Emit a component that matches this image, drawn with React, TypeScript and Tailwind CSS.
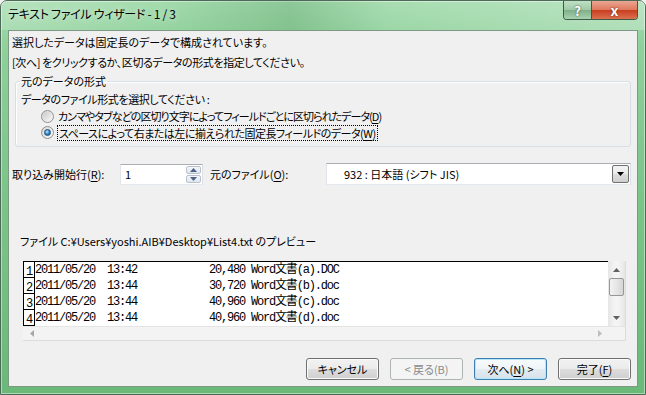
import React from 'react'

const jp = "font-['Noto_Sans_CJK_JP','Noto_Sans',sans-serif] [font-feature-settings:'palt']"
const mono = "font-['Liberation_Mono','Noto_Sans_CJK_JP',monospace] text-[12px] tracking-[-1.2px]"

const rows = [
  '2011/05/20  13:42            20,480 Word文書(a).DOC',
  '2011/05/20  13:44            30,720 Word文書(b).doc',
  '2011/05/20  13:44            40,960 Word文書(c).doc',
  '2011/05/20  13:44            40,960 Word文書(d).doc',
]

function U({ children }: { children: React.ReactNode }) {
  return <span className="underline decoration-1 underline-offset-[2px]">{children}</span>
}

function Radio({ checked = false }: { checked?: boolean }) {
  return (
    <span className="flex h-[13px] w-[13px] shrink-0 items-center justify-center rounded-full border border-[#8e8f8f] bg-[linear-gradient(135deg,#d6d6d6,#fafafa)]">
      {checked ? (
        <span className="h-[7px] w-[7px] rounded-full border border-[#1b4f7e] bg-[radial-gradient(circle_at_40%_35%,#c6ecff_0%,#3d92d4_45%,#0f3f6c_100%)]" />
      ) : (
        <span className="h-[9px] w-[9px] rounded-full bg-[linear-gradient(135deg,#cbcbcb,#f6f6f6)]" />
      )}
    </span>
  )
}

function Btn({ kind = 'normal', children }: { kind?: 'normal' | 'default' | 'disabled'; children: React.ReactNode }) {
  const look =
    kind === 'disabled'
      ? 'border-[#adb2b5] bg-[#f4f4f4] text-[#8a8a8a]'
      : kind === 'default'
        ? 'border-[#3c7fb1] text-black bg-[linear-gradient(#f7fbfd_0%,#eef4f8_49%,#e2ebf1_51%,#d6e2ea_100%)] shadow-[inset_0_0_0_1px_#b5e5f8]'
        : 'border-[#707070] text-black bg-[linear-gradient(#f2f2f2_0%,#ebebeb_49%,#dddddd_51%,#cfcfcf_100%)] shadow-[inset_0_0_0_1px_#fbfbfb]'
  return (
    <div className={`flex h-[22px] w-[73px] items-center justify-center rounded-[3px] border text-[11px] leading-none ${look}`}>
      {children}
    </div>
  )
}

function Tri({ dir, color }: { dir: 'up' | 'down' | 'left' | 'right'; color: string }) {
  const pts = {
    up: '0,4 3.5,0 7,4',
    down: '0,0 7,0 3.5,4',
    left: '4,0 4,7 0,3.5',
    right: '0,0 0,7 4,3.5',
  }[dir]
  const w = dir === 'up' || dir === 'down' ? 7 : 4
  const h = dir === 'up' || dir === 'down' ? 4 : 7
  return (
    <svg width={w} height={h} viewBox={`0 0 ${w} ${h}`}>
      <polygon points={pts} fill={color} />
    </svg>
  )
}

export default function App() {
  return (
    <div className={`h-[395px] w-[646px] overflow-hidden bg-[#f0f0f0] ${jp}`}>
      <div className="flex h-[395px] w-[646px] flex-col rounded-t-[7px] border border-[#4d6957] bg-[linear-gradient(180deg,#a4dcae_0%,#8fd09b_12%,#7fc78c_40%,#6ab978_100%)] shadow-[inset_0_0_0_1px_rgba(255,255,255,0.45)]">
        {/* title bar */}
        <div className="flex h-[29px] shrink-0 items-start bg-[linear-gradient(90deg,rgba(255,255,255,0.2)_0%,rgba(255,255,255,0)_25%,rgba(50,120,65,0.2)_45%,rgba(255,255,255,0.05)_60%,rgba(255,255,255,0.25)_100%)]">
          <div className="pl-[7px] pt-[5px] text-[12px] leading-[16px] tracking-[-0.3px] text-black [text-shadow:0_0_6px_rgba(255,255,255,0.8)]">
            テキスト ファイル ウィザード - 1 / 3
          </div>
          <div className="ml-auto mr-[7px] flex h-[19px] overflow-hidden rounded-b-[4px] border border-t-0 border-[#3e5a47]">
            <div className="flex w-[28px] items-center justify-center border-r border-[#3e5a47] bg-[linear-gradient(#bfe0c4_0%,#a0caa8_48%,#80b08a_52%,#a8d2b0_100%)] text-[13px] font-bold leading-none text-white [text-shadow:0_0_2px_#33443a]">
              ?
            </div>
            <div className="flex w-[45px] items-center justify-center bg-[linear-gradient(#eca693_0%,#df7a5e_48%,#c93f22_52%,#dc7150_100%)] text-[14px] font-bold leading-none text-white [text-shadow:0_0_2px_#5a1b10]">
              x
            </div>
          </div>
        </div>

        {/* client area */}
        <div className="mx-[7px] mb-[7px] flex flex-1 flex-col border border-[#7e9886] bg-[#f0f0f0] text-[11px] leading-[16px] text-black">
          <div className="ml-[3px] mt-[3px] h-[16px]">選択したデータは固定長のデータで構成されています。</div>
          <div className="ml-[3px] mt-[4px] h-[16px] tracking-[-0.4px]">[次へ] をクリックするか、区切るデータの形式を指定してください。</div>

          <fieldset className="ml-[6px] mt-[3px] h-[74px] w-[616px] rounded-[3px] border border-[#d5dfe5] px-[5px] shadow-[inset_1px_1px_0_#ffffff]">
            <legend className="ml-[-1px] px-[1px] leading-[16px]">元のデータの形式</legend>
            <div className="mt-[2px] h-[16px] tracking-[-0.4px]">データのファイル形式を選択してください :</div>
            <div className="ml-[20px] mt-[1px] flex h-[16px] items-center gap-[4px]">
              <Radio />
              <span className="tracking-[-0.95px]">
                カンマやタブなどの区切り文字によってフィールドごとに区切られたデータ(<U>D</U>)
              </span>
            </div>
            <div className="ml-[20px] flex h-[17px] items-center gap-[3px]">
              <Radio checked />
              <span className="border border-dotted border-black px-[1px] leading-[14px] tracking-[-0.5px]">
                スペースによって右または左に揃えられた固定長フィールドのデータ(<U>W</U>)
              </span>
            </div>
          </fieldset>

          <div className="mt-[16px] flex h-[22px] items-center">
            <div className="w-[111px] pl-[3px]">
              取り込み開始行(<U>R</U>):
            </div>
            <div className="flex h-[21px] w-[83px] items-center border border-[#abadb3] border-b-[#e3e9ef] border-l-[#e2e3ea] border-r-[#dbdfe6] bg-white">
              <span className="flex-1 pl-[4px]">1</span>
              <div className="mr-[1px] flex h-[17px] w-[15px] flex-col gap-[1px]">
                <div className="flex flex-1 items-center justify-center rounded-[2px] border border-[#b9c2cc] bg-[linear-gradient(#f4f7fa,#dfe6ee)]">
                  <Tri dir="up" color="#4d6185" />
                </div>
                <div className="flex flex-1 items-center justify-center rounded-[2px] border border-[#b9c2cc] bg-[linear-gradient(#f4f7fa,#dfe6ee)]">
                  <Tri dir="down" color="#4d6185" />
                </div>
              </div>
            </div>
            <div className="ml-[7px] w-[116px]">
              元のファイル(<U>O</U>):
            </div>
            <div className="flex h-[22px] w-[305px] items-center border border-[#abadb3] border-b-[#e3e9ef] border-l-[#e2e3ea] border-r-[#dbdfe6] bg-white">
              <span className="flex-1 pl-[17px]">932 : 日本語 (シフト JIS)</span>
              <div className="mr-[1px] flex h-[18px] w-[17px] items-center justify-center rounded-[2px] border border-[#707070] bg-[linear-gradient(#f2f2f2_0%,#ebebeb_49%,#dddddd_51%,#cfcfcf_100%)]">
                <Tri dir="down" color="#000000" />
              </div>
            </div>
          </div>

          <div className="ml-[11px] mt-[48px] h-[16px]">ファイル C:¥Users¥yoshi.AIB¥Desktop¥List4.txt のプレビュー</div>

          <div className="ml-[14px] mt-[12px] flex h-[80px] w-[603px] flex-col border-b border-r border-[#dcdcdc] bg-[#f0f0f0]">
            <div className="flex h-[65px]">
              <div className="flex-1 overflow-hidden border-l border-t border-black bg-white">
                {rows.map((r, i) => (
                  <div key={i} className="flex h-[16px]">
                    <div className="relative h-[16px] w-[11px] shrink-0 border-b border-r border-black">
                      <span className={`absolute bottom-[-3px] left-[2px] ${mono}`}>{i + 1}</span>
                    </div>
                    <div className={`whitespace-pre leading-[16px] ${mono}`}>{r}</div>
                  </div>
                ))}
              </div>
              <div className="flex w-[17px] flex-col bg-[linear-gradient(90deg,#e6e6e6,#f4f4f4_40%,#f4f4f4_60%,#e6e6e6)]">
                <div className="flex h-[17px] items-center justify-center">
                  <Tri dir="up" color="#606060" />
                </div>
                <div className="mx-[1px] h-[18px] rounded-[2px] border border-[#979797] bg-[linear-gradient(90deg,#f2f2f2,#e6e6e6_50%,#d6d6d6)]" />
                <div className="flex-1" />
                <div className="flex h-[17px] items-center justify-center">
                  <Tri dir="down" color="#606060" />
                </div>
              </div>
            </div>
            <div className="flex h-[15px] items-center border-t border-[#e4e4e4] bg-[#f3f3f3]">
              <div className="flex w-[17px] justify-center">
                <Tri dir="left" color="#a7a7a7" />
              </div>
              <div className="flex-1" />
              <div className="flex w-[17px] justify-center">
                <Tri dir="right" color="#bdbdbd" />
              </div>
              <div className="w-[17px]" />
            </div>
          </div>

          <div className="mr-[6px] mt-[17px] flex justify-end gap-[11px]">
            <Btn>キャンセル</Btn>
            <Btn kind="disabled">&lt; 戻る(B)</Btn>
            <Btn kind="default">
              次へ(<U>N</U>) &gt;
            </Btn>
            <Btn>
              完了(<U>F</U>)
            </Btn>
          </div>
        </div>
      </div>
    </div>
  )
}
